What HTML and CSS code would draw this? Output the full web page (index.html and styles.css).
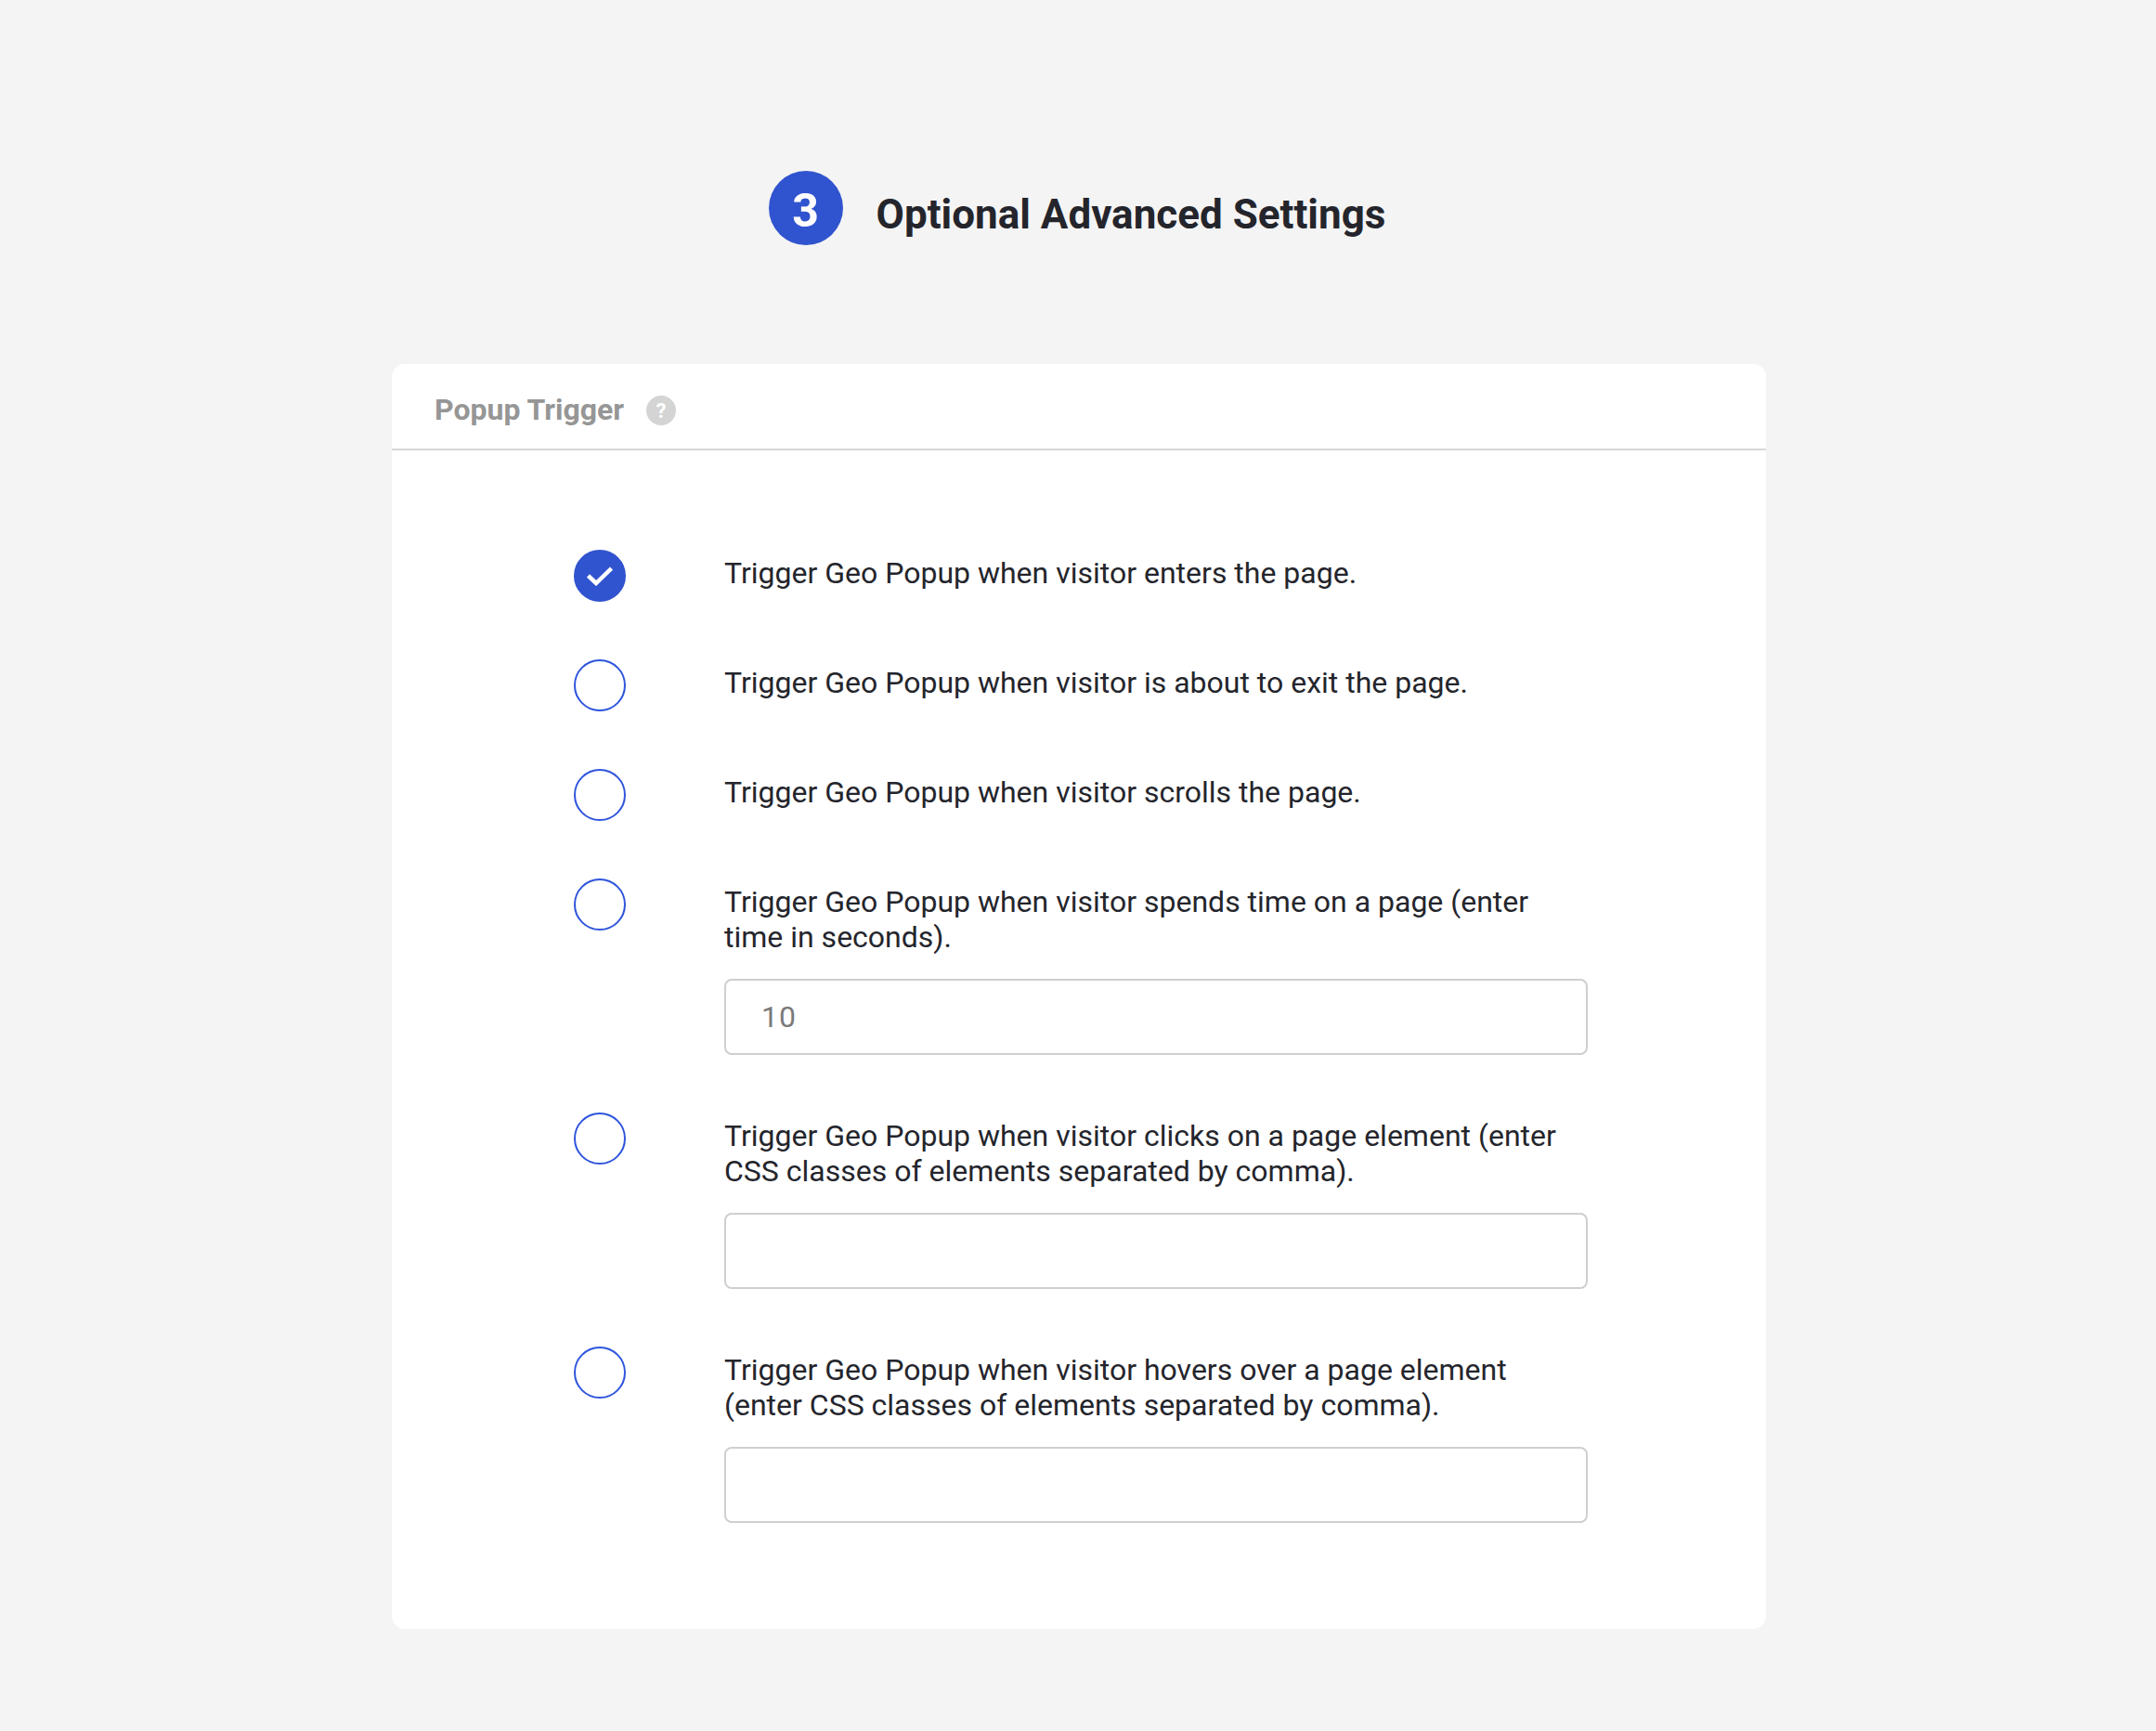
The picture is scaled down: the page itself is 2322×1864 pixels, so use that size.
FILE: index.html
```html
<!DOCTYPE html>
<html lang="en">
<head>
<meta charset="utf-8">
<title>Optional Advanced Settings</title>
<link rel="stylesheet" href="styles.css">
</head>
<body>
<main class="page">
  <header class="step">
    <span class="step-num">3</span>
    <h1 class="step-title">Optional Advanced Settings</h1>
  </header>
  <section class="card">
    <div class="card-head">
      <h2 class="card-title">Popup Trigger</h2>
      <span class="help">?</span>
    </div>
    <div class="options">
      <div class="option">
        <span class="check checked">
          <svg width="28" height="22" viewBox="0 0 28 22"><path d="M1.5 11 L10 19 L26.5 3" fill="none" stroke="#fff" stroke-width="4.5"/></svg>
        </span>
        <div class="body"><p class="label">Trigger Geo Popup when visitor enters the page.</p></div>
      </div>
      <div class="option">
        <span class="check"></span>
        <div class="body"><p class="label">Trigger Geo Popup when visitor is about to exit the page.</p></div>
      </div>
      <div class="option">
        <span class="check"></span>
        <div class="body"><p class="label">Trigger Geo Popup when visitor scrolls the page.</p></div>
      </div>
      <div class="option">
        <span class="check"></span>
        <div class="body">
          <p class="label">Trigger Geo Popup when visitor spends time on a page (enter time in seconds).</p>
          <input class="field" type="text" value="10">
        </div>
      </div>
      <div class="option">
        <span class="check"></span>
        <div class="body">
          <p class="label">Trigger Geo Popup when visitor clicks on a page element (enter CSS classes of elements separated by comma).</p>
          <input class="field" type="text">
        </div>
      </div>
      <div class="option">
        <span class="check"></span>
        <div class="body">
          <p class="label">Trigger Geo Popup when visitor hovers over a page element (enter CSS classes of elements separated by comma).</p>
          <input class="field" type="text">
        </div>
      </div>
    </div>
  </section>
</main>
</body>
</html>
```
FILE: styles.css
```css
html, body {
  margin: 0;
  padding: 0;
  background: #f4f4f4;
}
.page {
  min-height: 1864px;
  box-sizing: border-box;
  padding: 184px 0 0 2px;
  font-family: Roboto, "Liberation Sans", sans-serif;
  display: flex;
  flex-direction: column;
  align-items: center;
}
.step {
  display: flex;
  align-items: center;
  gap: 36px;
  height: 80px;
  width: 1480px;
  justify-content: center;
  box-sizing: border-box;
  padding-right: 4px;
}
.step-num {
  width: 80px;
  height: 80px;
  box-sizing: border-box;
  padding-top: 6px;
  border-radius: 50%;
  background: #3053cf;
  color: #fff;
  font-size: 50px;
  font-weight: 700;
  display: flex;
  align-items: center;
  justify-content: center;
}
.step-title {
  margin: 14px 0 0;
  font-size: 44px;
  line-height: 52px;
  font-weight: 700;
  color: #24252c;
}
.card {
  margin-top: 128px;
  width: 1480px;
  height: 1362px;
  box-sizing: border-box;
  background: #fff;
  border-radius: 14px;
}
.card-head {
  display: flex;
  align-items: center;
  height: 93px;
  box-sizing: border-box;
  padding: 6px 0 0 46px;
  gap: 24px;
  border-bottom: 2px solid #d8d8d8;
}
.card-title {
  margin: 0;
  font-size: 32px;
  font-weight: 700;
  color: #969696;
}
.help {
  width: 32px;
  height: 32px;
  margin-top: 3px;
  border-radius: 50%;
  background: #d4d4d4;
  color: #fff;
  font-size: 22px;
  font-weight: 700;
  display: flex;
  align-items: center;
  justify-content: center;
}
.options {
  padding: 107px 0 0 196px;
  display: flex;
  flex-direction: column;
  gap: 62px;
}
.option {
  display: flex;
  gap: 106px;
  align-items: flex-start;
}
.check {
  width: 56px;
  height: 56px;
  flex: none;
  box-sizing: border-box;
  border: 2px solid #2f55dc;
  border-radius: 50%;
  display: flex;
  align-items: center;
  justify-content: center;
}
.check.checked {
  background: #3053cf;
  border-color: #3053cf;
}
.body {
  width: 930px;
}
.label {
  margin: 0;
  padding-top: 6px;
  font-size: 32px;
  line-height: 38px;
  color: #24252c;
}
.field {
  display: block;
  width: 100%;
  height: 82px;
  margin-top: 26px;
  box-sizing: border-box;
  padding: 0 38px;
  border: 2px solid #cfcfcf;
  border-radius: 8px;
  background: #fff;
  font-family: Roboto, "Liberation Sans", sans-serif;
  font-size: 32px;
  color: #7a7a7a;
  letter-spacing: 1px;
}
```
